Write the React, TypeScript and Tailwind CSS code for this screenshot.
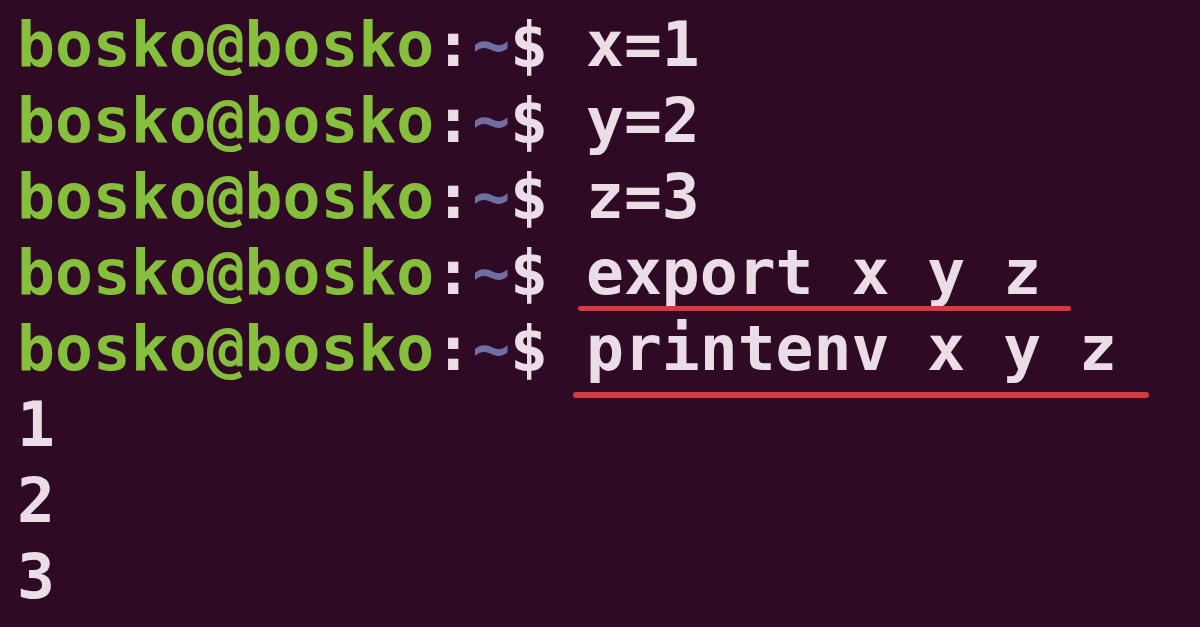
const mono = { fontFamily: '"DejaVu Sans Mono", "Liberation Mono", monospace' };

const Prompt = () => (
  <>
    <span className="text-[#86bf3c]">bosko@bosko</span>
    <span className="text-[#eadde6]">:</span>
    <span className="text-[#6f6fa3]">~</span>
    <span className="text-[#eadde6]">$ </span>
  </>
);

export default function App() {
  return (
    <div
      className="w-[1200px] h-[627px] overflow-hidden bg-[#2f0a25] pt-[7px] pl-[17px] text-[63px] leading-[76px] font-bold text-[#eadde6] whitespace-pre"
      style={mono}
    >
      <div>
        <Prompt />
        x=1
      </div>
      <div>
        <Prompt />
        y=2
      </div>
      <div>
        <Prompt />
        z=3
      </div>
      <div>
        <Prompt />
        <span className="relative">
          export x y z
          <span className="absolute left-[-8px] right-[-30px] top-[70px] h-[5px] rounded-full bg-[#d8393d]" />
        </span>
      </div>
      <div>
        <Prompt />
        <span className="relative">
          printenv x y z
          <span className="absolute left-[-13px] right-[-32px] top-[80px] h-[6px] rounded-full bg-[#d8393d]" />
        </span>
      </div>
      <div>1</div>
      <div>2</div>
      <div>3</div>
    </div>
  );
}
